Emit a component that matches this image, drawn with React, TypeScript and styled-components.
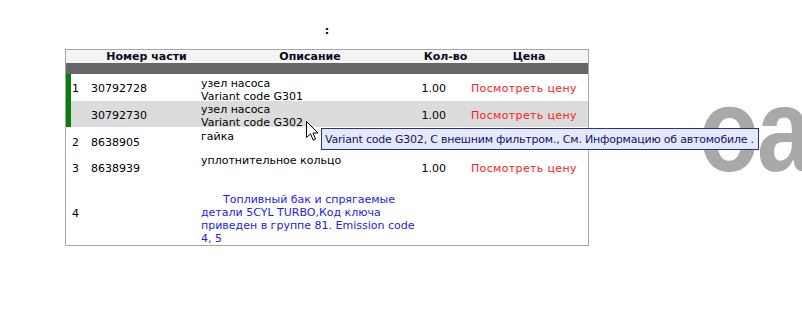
import React from 'react';
import styled, { createGlobalStyle } from 'styled-components';

const GlobalStyle = createGlobalStyle`
  html, body {
    margin: 0;
    padding: 0;
    background: #fff;
    overflow: hidden;
  }
  body {
    font-family: "DejaVu Sans", Verdana, sans-serif;
    font-size: 11px;
    line-height: 13px;
    color: #000;
  }
`;

const Page = styled.div`
  position: relative;
  width: 802px;
  height: 313px;
  padding: 24px 0 0 65px;
  box-sizing: border-box;
  overflow: hidden;
`;

const Block = styled.div`
  width: 524px;
`;

const Title = styled.div`
  text-align: center;
  font-weight: bold;
  height: 13px;
  margin-bottom: 12px;
`;

const PartsTable = styled.table`
  width: 524px;
  table-layout: fixed;
  border-collapse: separate;
  border-spacing: 0;
  border: 1px solid #a6a6a6;
`;

const HeadCell = styled.th<{ $shift?: number }>`
  height: 13px;
  padding: 0 0 0 ${p => p.$shift ?? 0}px;
  background: #f4f4f4;
  font-weight: bold;
  text-align: center;
  color: #0a0a22;
`;

const DarkBar = styled.td`
  height: 11px;
  padding: 0;
  background: #666;
`;

const Row = styled.tr<{ $shade?: boolean; $h: number }>`
  height: ${p => p.$h}px;
  background: ${p => (p.$shade ? '#dcdcdc' : '#fff')};
`;

const PosCell = styled.td<{ $marked?: boolean; $pad: number }>`
  padding: ${p => p.$pad}px 0 0 1px;
  border-left: 5px solid ${p => (p.$marked ? '#0a7d0a' : 'transparent')};
  vertical-align: middle;
`;

const NumberCell = styled.td<{ $pad: number }>`
  padding: ${p => p.$pad}px 0 0 3px;
  vertical-align: middle;
`;

const DescCell = styled.td<{ $pad: number }>`
  padding: ${p => p.$pad}px 0 0 2px;
  vertical-align: top;
`;

/* pulls the cell's box back up so the top padding doesn't stretch the row */
const DescBody = styled.div<{ $pad: number }>`
  margin-bottom: -${p => p.$pad}px;
`;

const QtyCell = styled.td<{ $pad: number }>`
  padding: ${p => p.$pad}px 24px 0 0;
  text-align: right;
  vertical-align: middle;
`;

const PriceCell = styled.td<{ $pad: number }>`
  padding: ${p => p.$pad}px 0 0 1px;
  color: #ff1a1a;
  letter-spacing: 0.35px;
  vertical-align: middle;
  white-space: nowrap;
`;

const GroupNote = styled.span`
  display: block;
  color: #1c1cf0;
  text-indent: 22px;
`;

const Tooltip = styled.div`
  position: absolute;
  left: 321px;
  top: 128px;
  height: 20px;
  padding: 0 4px 0 3px;
  display: flex;
  align-items: center;
  background: #e6e9fc;
  border: 1px solid #1f3590;
  color: #12126e;
  letter-spacing: -0.2px;
  white-space: nowrap;
`;

const Pointer = styled.svg`
  position: absolute;
  left: 306px;
  top: 121px;
`;

const Watermark = styled.div`
  position: absolute;
  left: 699px;
  top: 70px;
  font-family: "Liberation Sans", Arial, sans-serif;
  font-weight: bold;
  font-size: 118px;
  line-height: 120px;
  color: #a9a9a9;
  letter-spacing: -3px;
  white-space: nowrap;
  transform: scaleX(0.84);
  transform-origin: left top;
`;

type Part = {
  pos: string;
  num: string;
  desc: React.ReactNode;
  qty?: string;
  marked?: boolean;
  shade?: boolean;
  h: number;
  pad: number;
  descPad: number;
};

const parts: Part[] = [
  { pos: '1', num: '30792728', desc: <>узел насоса<br />Variant code G301</>, qty: '1.00', marked: true, h: 27, pad: 2, descPad: 3 },
  { pos: '', num: '30792730', desc: <>узел насоса<br />Variant code G302</>, qty: '1.00', marked: true, shade: true, h: 26, pad: 2, descPad: 2 },
  { pos: '2', num: '8638905', desc: 'гайка', h: 27, pad: 4, descPad: 3 },
  { pos: '3', num: '8638939', desc: 'уплотнительное кольцо', qty: '1.00', h: 26, pad: 2, descPad: 0 },
  {
    pos: '4',
    num: '',
    desc: (
      <>
        <br />
        <GroupNote>
          Топливный бак и спрягаемые<br />
          детали 5CYL TURBO,Код ключа<br />
          приведен в группе 81. Emission code<br />
          4, 5
        </GroupNote>
      </>
    ),
    h: 65,
    pad: 2,
    descPad: 0,
  },
];

export default function App() {
  return (
    <Page>
      <GlobalStyle />
      <Block>
        <Title>:</Title>
        <PartsTable>
          <colgroup>
            <col style={{ width: 22 }} />
            <col style={{ width: 111 }} />
            <col style={{ width: 222 }} />
            <col style={{ width: 49 }} />
            <col style={{ width: 118 }} />
          </colgroup>
          <thead>
            <tr>
              <HeadCell />
              <HeadCell $shift={6}>Номер части</HeadCell>
              <HeadCell>Описание</HeadCell>
              <HeadCell>Кол-во</HeadCell>
              <HeadCell>Цена</HeadCell>
            </tr>
          </thead>
          <tbody>
            <tr>
              <DarkBar colSpan={5} />
            </tr>
            {parts.map((p, i) => (
              <Row key={i} $shade={p.shade} $h={p.h}>
                <PosCell $marked={p.marked} $pad={p.pad}>{p.pos}</PosCell>
                <NumberCell $pad={p.pad}>{p.num}</NumberCell>
                <DescCell $pad={p.descPad}>
                  <DescBody $pad={p.descPad}>{p.desc}</DescBody>
                </DescCell>
                <QtyCell $pad={p.pad}>{p.qty}</QtyCell>
                <PriceCell $pad={p.pad}>{p.qty ? 'Посмотреть цену' : ''}</PriceCell>
              </Row>
            ))}
          </tbody>
        </PartsTable>
      </Block>

      <Watermark>oa</Watermark>

      <Tooltip>Variant code G302, С внешним фильтром., См. Информацию об автомобиле .</Tooltip>

      <Pointer width="13" height="21" viewBox="0 0 13 21">
        <path
          d="M0.5 0.5 L0.5 16.5 L4.5 12.8 L7.2 19.2 L9.6 18.2 L7 12 L12 12 Z"
          fill="#fff"
          stroke="#000"
          strokeWidth="1"
          strokeLinejoin="miter"
        />
      </Pointer>
    </Page>
  );
}
